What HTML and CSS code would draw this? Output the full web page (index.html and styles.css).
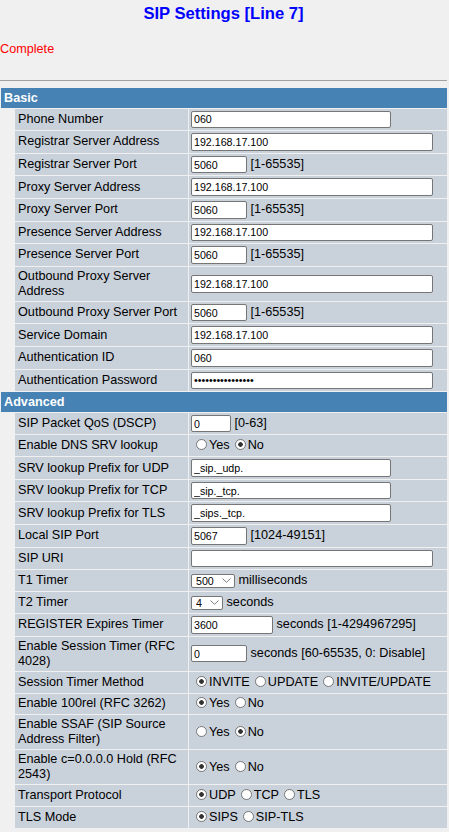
FILE: index.html
```html
<!DOCTYPE html>
<html>
<head>
<meta charset="utf-8">
<title>SIP Settings [Line 7]</title>
<link rel="stylesheet" href="styles.css">
</head>
<body>
<div class="page">
  <h1 class="title">SIP Settings [Line 7]</h1>
  <div class="status">Complete</div>
  <hr class="rule">
  <table class="settings">
    <colgroup><col class="c-indent"><col class="c-label"><col class="c-value"></colgroup>
    <tr class="section"><td colspan="3">Basic</td></tr>
    <tr class="row"><td class="indent"></td><td class="label">Phone Number</td><td class="value"><input class="txt w200" type="text" value="060"></td></tr>
    <tr class="row"><td class="indent"></td><td class="label">Registrar Server Address</td><td class="value"><input class="txt w242" type="text" value="192.168.17.100"></td></tr>
    <tr class="row"><td class="indent"></td><td class="label">Registrar Server Port</td><td class="value"><input class="txt w56" type="text" value="5060"> [1-65535]</td></tr>
    <tr class="row"><td class="indent"></td><td class="label">Proxy Server Address</td><td class="value"><input class="txt w242" type="text" value="192.168.17.100"></td></tr>
    <tr class="row"><td class="indent"></td><td class="label">Proxy Server Port</td><td class="value"><input class="txt w56" type="text" value="5060"> [1-65535]</td></tr>
    <tr class="row"><td class="indent"></td><td class="label">Presence Server Address</td><td class="value"><input class="txt w242" type="text" value="192.168.17.100"></td></tr>
    <tr class="row"><td class="indent"></td><td class="label">Presence Server Port</td><td class="value"><input class="txt w56" type="text" value="5060"> [1-65535]</td></tr>
    <tr class="row"><td class="indent"></td><td class="label">Outbound Proxy Server Address</td><td class="value"><input class="txt w242" type="text" value="192.168.17.100"></td></tr>
    <tr class="row"><td class="indent"></td><td class="label">Outbound Proxy Server Port</td><td class="value"><input class="txt w56" type="text" value="5060"> [1-65535]</td></tr>
    <tr class="row"><td class="indent"></td><td class="label">Service Domain</td><td class="value"><input class="txt w242" type="text" value="192.168.17.100"></td></tr>
    <tr class="row"><td class="indent"></td><td class="label">Authentication ID</td><td class="value"><input class="txt w242" type="text" value="060"></td></tr>
    <tr class="row"><td class="indent"></td><td class="label">Authentication Password</td><td class="value"><input class="txt w242" type="password" value="0000000000000000"></td></tr>
    <tr class="section"><td colspan="3">Advanced</td></tr>
    <tr class="row"><td class="indent"></td><td class="label">SIP Packet QoS (DSCP)</td><td class="value"><input class="txt w40" type="text" value="0"> [0-63]</td></tr>
    <tr class="row"><td class="indent"></td><td class="label">Enable DNS SRV lookup</td><td class="value"><input class="rad" type="radio" name="dns"><span>Yes</span><input class="rad" type="radio" name="dns" checked><span>No</span></td></tr>
    <tr class="row"><td class="indent"></td><td class="label">SRV lookup Prefix for UDP</td><td class="value"><input class="txt w200" type="text" value="_sip._udp."></td></tr>
    <tr class="row"><td class="indent"></td><td class="label">SRV lookup Prefix for TCP</td><td class="value"><input class="txt w200" type="text" value="_sip._tcp."></td></tr>
    <tr class="row"><td class="indent"></td><td class="label">SRV lookup Prefix for TLS</td><td class="value"><input class="txt w200" type="text" value="_sips._tcp."></td></tr>
    <tr class="row"><td class="indent"></td><td class="label">Local SIP Port</td><td class="value"><input class="txt w56" type="text" value="5067"> [1024-49151]</td></tr>
    <tr class="row"><td class="indent"></td><td class="label">SIP URI</td><td class="value"><input class="txt w242" type="text" value=""></td></tr>
    <tr class="row"><td class="indent"></td><td class="label">T1 Timer</td><td class="value"><span class="selbox w44"><select class="sel"><option>500</option></select><svg class="chev" viewBox="0 0 9 5" width="9" height="5"><path d="M0.5 0.5 L4.5 4.3 L8.5 0.5" fill="none" stroke="#7a7a7a" stroke-width="1"/></svg></span> milliseconds</td></tr>
    <tr class="row"><td class="indent"></td><td class="label">T2 Timer</td><td class="value"><span class="selbox w32"><select class="sel"><option>4</option></select><svg class="chev" viewBox="0 0 9 5" width="9" height="5"><path d="M0.5 0.5 L4.5 4.3 L8.5 0.5" fill="none" stroke="#7a7a7a" stroke-width="1"/></svg></span> seconds</td></tr>
    <tr class="row"><td class="indent"></td><td class="label">REGISTER Expires Timer</td><td class="value"><input class="txt w82" type="text" value="3600"> seconds [1-4294967295]</td></tr>
    <tr class="row"><td class="indent"></td><td class="label">Enable Session Timer (RFC 4028)</td><td class="value"><input class="txt w56" type="text" value="0"> seconds [60-65535, 0: Disable]</td></tr>
    <tr class="row"><td class="indent"></td><td class="label">Session Timer Method</td><td class="value"><input class="rad" type="radio" name="stm" checked><span>INVITE</span><input class="rad" type="radio" name="stm"><span>UPDATE</span><input class="rad" type="radio" name="stm"><span>INVITE/UPDATE</span></td></tr>
    <tr class="row"><td class="indent"></td><td class="label">Enable 100rel (RFC 3262)</td><td class="value"><input class="rad" type="radio" name="rel" checked><span>Yes</span><input class="rad" type="radio" name="rel"><span>No</span></td></tr>
    <tr class="row"><td class="indent"></td><td class="label">Enable SSAF (SIP Source Address Filter)</td><td class="value"><input class="rad" type="radio" name="ssaf"><span>Yes</span><input class="rad" type="radio" name="ssaf" checked><span>No</span></td></tr>
    <tr class="row"><td class="indent"></td><td class="label">Enable c=0.0.0.0 Hold (RFC 2543)</td><td class="value"><input class="rad" type="radio" name="hold" checked><span>Yes</span><input class="rad" type="radio" name="hold"><span>No</span></td></tr>
    <tr class="row"><td class="indent"></td><td class="label">Transport Protocol</td><td class="value"><input class="rad" type="radio" name="tp" checked><span>UDP</span><input class="rad" type="radio" name="tp"><span>TCP</span><input class="rad" type="radio" name="tp"><span>TLS</span></td></tr>
    <tr class="row"><td class="indent"></td><td class="label">TLS Mode</td><td class="value"><input class="rad" type="radio" name="tls" checked><span>SIPS</span><input class="rad" type="radio" name="tls"><span>SIP-TLS</span></td></tr>
  </table>
</div>
</body>
</html>
```

FILE: styles.css
```css
html, body {
  margin: 0;
  padding: 0;
  background: #f0f0f0;
}

body {
  font-family: "Liberation Sans", Arial, sans-serif;
  font-size: 12.67px;
  color: #000;
}

.page {
  width: 447px;
}

.title {
  margin: 0;
  padding-top: 3.5px;
  text-align: center;
  font-size: 16.6px;
  line-height: 19px;
  font-weight: bold;
  color: #0000ff;
}

.status {
  margin-top: 19px;
  line-height: 15px;
  color: #ff0000;
}

.rule {
  margin: 23.4px 0 0 0;
  height: 0;
  border: 0;
  border-top: 1px solid #a0a0a0;
  width: 447px;
}

.settings {
  margin-top: 6px;
  width: 448px;
  table-layout: fixed;
  border-collapse: separate;
  border-spacing: 1px;
}

.c-indent { width: 13px; }
.c-label { width: 173px; }
.c-value { width: 258px; }

.settings td {
  padding: 0;
  vertical-align: middle;
}

.section td {
  height: 19.7px;
  background: #4682b4;
  color: #fff;
  font-weight: bold;
  padding: 0 3px;
}

.row {
  height: 20.9px;
}

.row .label {
  background: #c9d1db;
  padding: 2px 3px;
  line-height: 15px;
}

.row .value {
  background: #c9d1db;
  padding: 2px 2px;
  line-height: 15px;
  white-space: nowrap;
}

.txt {
  box-sizing: border-box;
  height: 17.6px;
  margin: 0;
  padding: 0 2px;
  border: 1px solid #767676;
  border-radius: 2px;
  background: #fff;
  font-family: "Liberation Sans", Arial, sans-serif;
  font-size: 10.67px;
  color: #000;
  vertical-align: middle;
}

.w40 { width: 40px; }
.w56 { width: 56px; }
.w82 { width: 82px; }
.w200 { width: 200px; }
.w242 { width: 242px; }

.selbox {
  display: inline-block;
  position: relative;
  height: 14px;
  vertical-align: middle;
}

.w44 { width: 44px; }
.w32 { width: 32px; }

.sel {
  -webkit-appearance: none;
  appearance: none;
  display: block;
  box-sizing: border-box;
  width: 100%;
  height: 14px;
  margin: 0;
  padding: 0 0 0 4px;
  border: 1px solid #767676;
  border-radius: 2px;
  background: #fff;
  font-family: "Liberation Sans", Arial, sans-serif;
  font-size: 10.67px;
  line-height: 12px;
  color: #000;
}

.chev {
  position: absolute;
  right: 4px;
  top: 4.5px;
  pointer-events: none;
}

.rad {
  -webkit-appearance: none;
  appearance: none;
  box-sizing: border-box;
  width: 11px;
  height: 11px;
  margin: 0 2px 0 5px;
  border: 1px solid #767676;
  border-radius: 50%;
  background: #fff;
  vertical-align: -1px;
}

.rad:checked {
  background: radial-gradient(circle, #333 0, #333 2px, #fff 2.6px);
}
```
